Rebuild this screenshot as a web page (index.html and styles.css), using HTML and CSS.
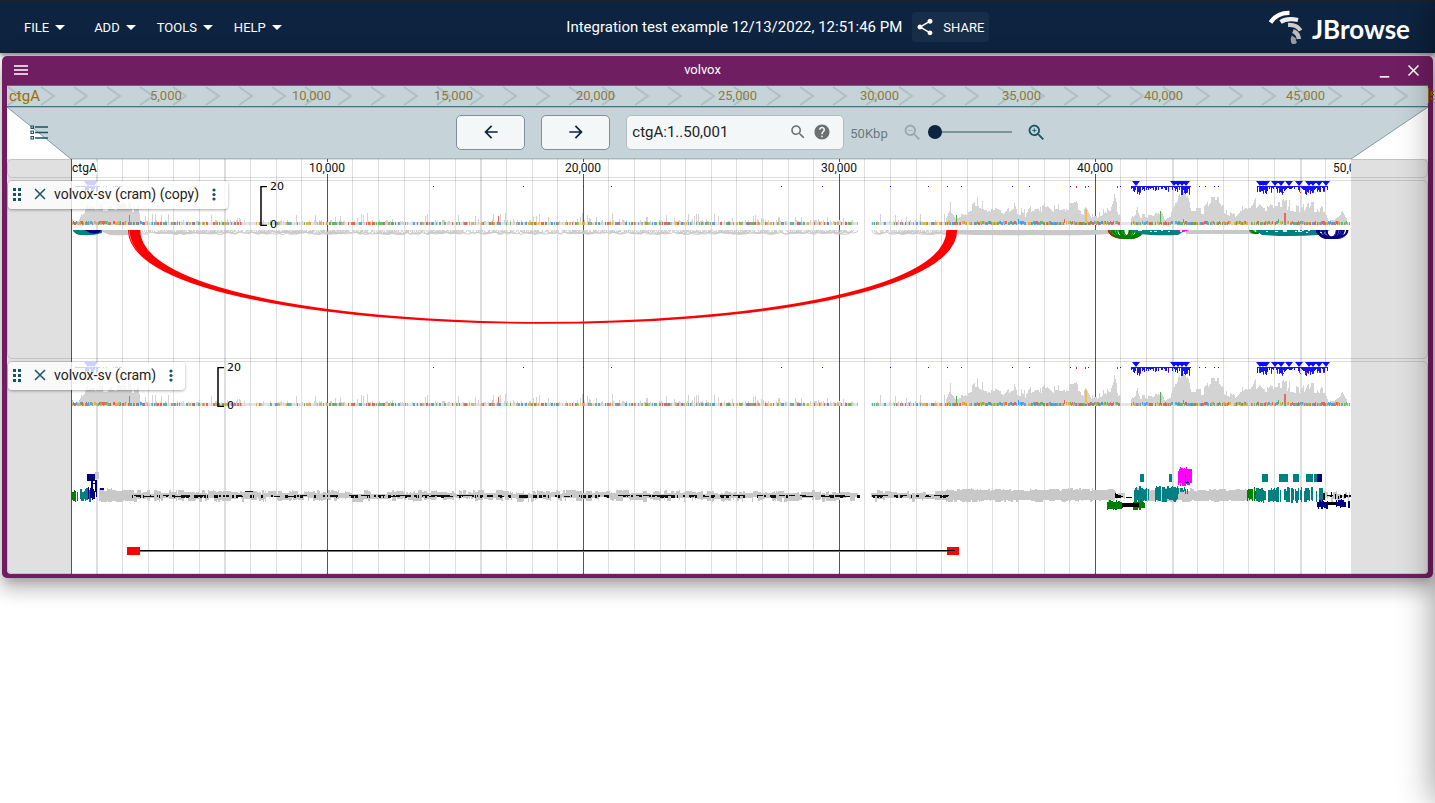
FILE: index.html
```html
<!DOCTYPE html>
<html lang="en">
<head>
<meta charset="utf-8">
<title>JBrowse</title>
<link rel="stylesheet" href="styles.css">
</head>
<body>
<header class="appbar">
  <nav class="menus">
    <button class="menu">FILE<svg class="caret" viewBox="0 0 10 5"><path d="M0 0h10L5 5z"/></svg></button>
    <button class="menu">ADD<svg class="caret" viewBox="0 0 10 5"><path d="M0 0h10L5 5z"/></svg></button>
    <button class="menu">TOOLS<svg class="caret" viewBox="0 0 10 5"><path d="M0 0h10L5 5z"/></svg></button>
    <button class="menu">HELP<svg class="caret" viewBox="0 0 10 5"><path d="M0 0h10L5 5z"/></svg></button>
  </nav>
  <div class="session">
    <span class="session-name">Integration test example 12/13/2022, 12:51:46 PM</span>
    <button class="share"><svg class="icon20" viewBox="0 0 24 24"><path d="M18 16.08c-.76 0-1.44.3-1.96.77L8.91 12.7c.05-.23.09-.46.09-.7s-.04-.47-.09-.7l7.05-4.11c.54.5 1.25.81 2.04.81 1.66 0 3-1.34 3-3s-1.34-3-3-3-3 1.34-3 3c0 .24.04.47.09.7L8.04 9.81C7.5 9.31 6.79 9 6 9c-1.66 0-3 1.34-3 3s1.34 3 3 3c.79 0 1.5-.31 2.04-.81l7.12 4.16c-.05.21-.08.43-.08.65 0 1.61 1.31 2.92 2.92 2.92s2.92-1.31 2.92-2.92-1.31-2.92-2.92-2.92z"/></svg>SHARE</button>
  </div>
  <div class="logo">
    <svg class="logo-mark" viewBox="0 0 36 34" fill="none">
      <path d="M2.500 12.500Q9 2.500 21.500 2.800" stroke="#fff" stroke-width="4.200"/>
      <path d="M12.500 12Q19 7.500 30 10" stroke="#eee" stroke-width="4.200"/>
      <path d="M20 15Q29 14.500 32.500 20.500" stroke="#ccc" stroke-width="4.200"/>
      <path d="M25 21Q30 23 31 29" stroke="#bbb" stroke-width="4.500"/>
      <path d="M26 27Q24 30 27 34" stroke="#999" stroke-width="5"/>
    </svg>
    <span class="logo-text">JBrowse</span>
  </div>
</header>

<main class="window">
  <div class="titlebar">
    <button class="tb-btn" aria-label="View menu"><svg class="burger" viewBox="0 0 14 11"><path d="M0 1h14M0 5h14M0 9h14"/></svg></button>
    <h1 class="view-name">volvox</h1>
    <div class="tb-right">
      <button class="tb-btn" aria-label="Minimize"><svg class="icon20" viewBox="0 0 24 24"><path d="M6 19h12v2H6z"/></svg></button>
      <button class="tb-btn" aria-label="Close"><svg class="icon20" viewBox="0 0 24 24"><path d="M19 6.410 17.590 5 12 10.590 6.410 5 5 6.410 10.590 12 5 17.590 6.410 19 12 13.410 17.590 19 19 17.590 13.410 12z"/></svg></button>
    </div>
  </div>

  <div class="overview">
    <svg class="chevrons" aria-hidden="true"><defs><pattern id="chev" width="33" height="20" patternUnits="userSpaceOnUse"><path d="M1 1 14 10 1 19" fill="none" stroke="#b0bec3" stroke-width="2"/></pattern></defs><rect width="100%" height="100%" fill="url(#chev)"/></svg>
    <span class="ref-name">ctgA</span>
    <span></span><span>5,000</span><span>10,000</span><span>15,000</span><span>20,000</span><span>25,000</span><span>30,000</span><span>35,000</span><span>40,000</span><span>45,000</span><span class="last-tick">50,000</span>
  </div>

  <div class="nav">
    <svg class="funnel" viewBox="0 0 1421 52" preserveAspectRatio="none"><path d="M0 0H1421L1344 52H64z"/></svg>
    <button class="selector" aria-label="Open track selector"><svg viewBox="0 0 18 15"><path d="M5 2h13M5 7.500h13M5 13h13" stroke-width="1.400"/><path d="M1 1h2.500v2.500H1zM1 6h2.500v2.500H1zM1 11.500h2.500V14H1z" stroke-width="1.100"/></svg></button>
    <div class="controls">
      <button class="pan" aria-label="Pan left"><svg class="icon20" viewBox="0 0 24 24"><path d="M20 11H7.830l5.590-5.590L12 4l-8 8 8 8 1.410-1.410L7.830 13H20v-2z"/></svg></button>
      <button class="pan" aria-label="Pan right"><svg class="icon20" viewBox="0 0 24 24"><path d="m12 4-1.410 1.410L16.170 11H4v2h12.170l-5.580 5.590L12 20l8-8z"/></svg></button>
      <div class="search">
        <input type="text" value="ctgA:1..50,001" aria-label="Location">
        <svg class="icon18" viewBox="0 0 24 24"><path d="M15.500 14h-.79l-.28-.27C15.410 12.590 16 11.110 16 9.500 16 5.910 13.090 3 9.500 3S3 5.910 3 9.500 5.910 16 9.500 16c1.610 0 3.090-.59 4.230-1.570l.27.28v.79l5 4.990L20.490 19l-4.990-5zm-6 0C7.010 14 5 11.990 5 9.500S7.010 5 9.500 5 14 7.010 14 9.500 11.990 14 9.500 14z"/></svg>
        <button class="help" aria-label="Help"><svg class="icon18" viewBox="0 0 24 24"><path d="M12 2C6.480 2 2 6.480 2 12s4.480 10 10 10 10-4.480 10-10S17.520 2 12 2zm1 17h-2v-2h2v2zm2.070-7.750-.9.920C13.450 12.900 13 13.500 13 15h-2v-.5c0-1.100.45-2.100 1.170-2.830l1.240-1.260c.37-.36.590-.86.590-1.410 0-1.100-.9-2-2-2s-2 .9-2 2H8c0-2.210 1.790-4 4-4s4 1.790 4 4c0 .88-.36 1.680-.93 2.250z"/></svg></button>
      </div>
      <span class="bp">50Kbp</span>
      <button class="zoom off" aria-label="Zoom out" disabled><svg viewBox="0 0 24 24"><path d="M15.500 14h-.79l-.28-.27C15.410 12.590 16 11.110 16 9.500 16 5.910 13.090 3 9.500 3S3 5.910 3 9.500 5.910 16 9.500 16c1.610 0 3.090-.59 4.230-1.570l.27.28v.79l5 4.990L20.490 19l-4.990-5zm-6 0C7.010 14 5 11.990 5 9.500S7.010 5 9.500 5 14 7.010 14 9.500 11.990 14 9.500 14zM7 9h5v1H7z"/></svg></button>
      <input class="slider" type="range" min="0" max="100" value="0" aria-label="Zoom level">
      <button class="zoom" aria-label="Zoom in"><svg viewBox="0 0 24 24"><path d="M15.500 14h-.79l-.28-.27C15.410 12.590 16 11.110 16 9.500 16 5.910 13.090 3 9.500 3S3 5.910 3 9.500 5.910 16 9.500 16c1.610 0 3.090-.59 4.230-1.570l.27.28v.79l5 4.990L20.490 19l-4.990-5zm-6 0C7.010 14 5 11.990 5 9.500S7.010 5 9.500 5 14 7.010 14 9.500 11.990 14 9.500 14zM12 10h-2v2H9v-2H7V9h2V7h1v2h2v1z"/></svg></button>
    </div>
  </div>

  <div class="tracks">
    <svg class="gridlines" id="grid" viewBox="71 0 1280 100" preserveAspectRatio="none" aria-hidden="true"></svg>
    <div class="ruler">
      <div class="ticks"><span class="first">ctgA</span><span class="tick">10,000</span><span class="tick">20,000</span><span class="tick">30,000</span><span class="tick">40,000</span><span class="tick">50,000</span></div>
    </div>
    <section class="track">
      <svg class="plot" id="arcs" viewBox="71 181 1280 177" preserveAspectRatio="none"></svg>
      <div class="label">
        <svg class="drag" viewBox="0 0 8 13"><path d="M0 0h3v3H0zM5 0h3v3H5zM0 5h3v3H0zM5 5h3v3H5zM0 10h3v3H0zM5 10h3v3H5z"/></svg>
        <button aria-label="Close track"><svg class="cross" viewBox="0 0 12 12"><path d="M1 1 11 11M11 1 1 11"/></svg></button>
        <span class="label-text">volvox-sv (cram) (copy)</span>
        <button aria-label="Track menu"><svg class="dots" viewBox="0 0 4 13"><circle cx="2" cy="2" r="1.600"/><circle cx="2" cy="6.500" r="1.600"/><circle cx="2" cy="11" r="1.600"/></svg></button>
      </div>
      <div class="yscale wide"><svg viewBox="0 0 7 40"><path d="M7 .5H1V39.500H7"/></svg><span>20</span><span>0</span></div>
    </section>
    <section class="track">
      <svg class="plot tall" id="pileup" viewBox="71 362 1280 211" preserveAspectRatio="none"></svg>
      <div class="label">
        <svg class="drag" viewBox="0 0 8 13"><path d="M0 0h3v3H0zM5 0h3v3H5zM0 5h3v3H0zM5 5h3v3H5zM0 10h3v3H0zM5 10h3v3H5z"/></svg>
        <button aria-label="Close track"><svg class="cross" viewBox="0 0 12 12"><path d="M1 1 11 11M11 1 1 11"/></svg></button>
        <span class="label-text">volvox-sv (cram)</span>
        <button aria-label="Track menu"><svg class="dots" viewBox="0 0 4 13"><circle cx="2" cy="2" r="1.600"/><circle cx="2" cy="6.500" r="1.600"/><circle cx="2" cy="11" r="1.600"/></svg></button>
      </div>
      <div class="yscale"><svg viewBox="0 0 7 40"><path d="M7 .5H1V39.500H7"/></svg><span>20</span><span>0</span></div>
    </section>
  </div>
</main>
<aside class="drawer-edge" aria-hidden="true"><div class="drawer"></div></aside>
<script src="tracks.js"></script>
</body>
</html>
```

FILE: styles.css
```css
* { box-sizing: border-box; }
html, body { height: 100%; }
body {
  margin: 0;
  position: relative;
  overflow: hidden;
  background: #fff;
  color: #222;
  font-family: Roboto, "Liberation Sans", sans-serif;
  font-size: 14px;
}
svg { display: block; flex: none; }
button {
  border: 0;
  padding: 0;
  background: none;
  color: inherit;
  font: inherit;
  display: flex;
  align-items: center;
}
.icon20 { width: 20px; height: 20px; fill: currentColor; }
.icon18 { width: 18px; height: 18px; fill: currentColor; }

.appbar {
  height: 53px;
  border-top: 1px solid #222;
  background: #0d233f;
  color: #fff;
  display: flex;
  justify-content: space-between;
  align-items: center;
  box-shadow: 0 2px 4px rgba(0,0,0,.3), 0 4px 6px rgba(0,0,0,.2);
}
.menus { display: flex; padding-left: 24px; gap: 21px; }
.menu { font-size: 13px; gap: 6px; height: 32px; }
.menu:first-child { margin-right: 8px; }
.caret { width: 10px; height: 5px; fill: #fff; }
.session { display: flex; align-items: center; gap: 10px; padding-left: 6px; }
.session-name { font-size: 15px; }
.share {
  height: 30px;
  padding: 0 5px 0 3px;
  gap: 8px;
  border-radius: 4px;
  background: #182d47;
  font-size: 13px;
}
.logo { display: flex; align-items: center; gap: 8px; padding-right: 25px; }
.logo-mark { width: 36px; height: 34px; }
.logo-text { font-family: Lato, sans-serif; font-weight: 700; font-size: 26px; line-height: 36px; padding-top: 4px; }

.window {
  margin: 3px 2px 0;
  padding: 0 5px 4px;
  border-radius: 5px;
  background: #701e62;
  box-shadow: 0 7px 8px -4px rgba(0,0,0,.2), 0 12px 17px 2px rgba(0,0,0,.14), 0 5px 22px 4px rgba(0,0,0,.12);
}
.titlebar {
  height: 29px;
  color: #fff;
  display: grid;
  grid-template-columns: 1fr auto 1fr;
  align-items: center;
}
.burger { width: 14px; height: 11px; stroke: #fff; stroke-width: 1.5; margin-left: 7px; }
.view-name { margin: 0; padding: 0 30px 2px 0; font-size: 13px; font-weight: 400; }
.tb-right { display: flex; justify-content: flex-end; gap: 10px; padding-right: 5px; }
.tb-right .icon20 { width: 19px; height: 19px; }

.overview {
  position: relative;
  height: 22px;
  padding: 0 0 1px 1px;
  display: grid;
  grid-template-columns: repeat(10, 1fr) 0;
  align-items: center;
  border: 1px solid #3f7880;
  border-width: 1px 0;
  background: #c6d4d9;
  color: #8b7a3c;
  font-size: 13px;
}
.overview > span { white-space: nowrap; }
.overview .ref-name { position: absolute; left: 2px; color: #a16b00; font-size: 15px; }
.overview .last-tick { width: 6px; overflow: hidden; border-left: 1px solid #a16b00; color: #a16b00; }
.chevrons { position: absolute; inset: 0; width: 100%; height: 100%; }
.overview > span:not(.ref-name) { position: relative; }

.nav {
  position: relative;
  height: 52px;
  padding-bottom: 2px;
  background: #fff;
  display: flex;
  align-items: center;
  color: #0d233f;
}
.funnel { position: absolute; inset: 0; width: 100%; height: 100%; }
.funnel path { fill: #c6d4d9; stroke: #7c9fa5; stroke-width: 1; }
.nav > button, .controls { position: relative; }
.selector { width: 64px; padding-left: 23px; }
.selector svg { width: 18px; height: 15px; stroke: #135560; fill: none; }
.controls { flex: 1; display: flex; align-items: center; justify-content: center; padding-left: 4px; }
.pan {
  width: 69px;
  height: 35px;
  margin-right: 16px;
  justify-content: center;
  border: 1px solid #7f8ea0;
  border-radius: 5px;
  background: #f3f7f8;
}
.search {
  width: 218px;
  height: 35px;
  padding: 0 12px 0 5px;
  display: flex;
  align-items: center;
  gap: 6px;
  border: 1px solid #b3bcc0;
  border-radius: 5px;
  background: #f3f7f8;
  color: #6c6f70;
}
.search input {
  flex: 1;
  min-width: 0;
  border: 0;
  padding: 0;
  background: none;
  color: #222;
  font: inherit;
  font-size: 15px;
}
.bp { margin: 2px 14px 0 6px; color: #6b787c; font-size: 13px; }
.zoom svg { width: 21px; height: 21px; fill: #135560; }
.zoom.off svg { fill: #9aa6aa; }
.slider { appearance: none; width: 84px; height: 16px; margin: 0 14px 0 5px; background: none; }
.slider::-webkit-slider-runnable-track { height: 2px; background: #7c93a1; }
.slider::-webkit-slider-thumb { appearance: none; width: 14px; height: 14px; margin-top: -6px; border-radius: 50%; background: #0d233f; }

.tracks {
  position: relative;
  display: grid;
  gap: 2px;
  overflow: hidden;
  border-radius: 0 0 4px 4px;
  background: linear-gradient(90deg, #e0e0e0 64px, #fff 64px calc(100% - 77px), #e0e0e0 calc(100% - 77px));
}
.gridlines { position: absolute; left: 64px; top: 0; width: calc(100% - 141px); height: 100%; }
.ruler, .track { position: relative; border: 1px solid rgba(0,0,0,.13); border-radius: 5px; }
.ruler { height: 19px; padding: 0 76px 0 63px; }
.ticks { position: relative; overflow: hidden; height: 17px; font-size: 12px; line-height: 12px; color: #111; }
.ticks span { background: #fff; position: absolute; top: 2px; }
.ticks .first { left: 1px; }
.tick { width: 40px; margin-left: -20px; text-align: center; }
.tick:nth-child(2) { left: 20%; }
.tick:nth-child(3) { left: 40%; }
.tick:nth-child(4) { left: 60%; }
.tick:nth-child(5) { left: 80%; }
.tick:nth-child(6) { left: 100%; }
.track { padding: 0 76px 0 63px; }
.plot { width: 100%; height: 177px; overflow: visible; }
.plot.tall { height: 211px; }

.label {
  position: absolute;
  left: 0;
  top: 0;
  height: 28px;
  padding: 0 12px 2px 5px;
  display: flex;
  align-items: center;
  border-radius: 4px;
  background: rgba(255,255,255,.8);
  box-shadow: 0 1px 3px rgba(0,0,0,.35);
  font-size: 14px;
}
.drag { width: 8px; height: 13px; fill: #135560; margin-right: 13px; }
.cross { width: 12px; height: 12px; stroke: #135560; stroke-width: 1.5; }
.label-text { margin: 0 13px 0 8px; }
.dots { width: 4px; height: 13px; fill: #135560; }
.yscale {
  position: absolute;
  left: 209px;
  top: 0;
  height: 49px;
  width: 40px;
  padding-left: 10px;
  display: flex;
  flex-direction: column;
  justify-content: space-between;
  color: #000;
  font: 11px/11px "DejaVu Sans", sans-serif;
}
.yscale.wide { left: 252px; }
.yscale svg { position: absolute; left: 0; top: 5px; width: 7px; height: 40px; fill: none; stroke: #000; stroke-width: 1.5; }

.drawer-edge { position: absolute; right: 0; top: 0; width: 60px; height: 100%; overflow: hidden; pointer-events: none; }
.drawer { margin-left: 60px; width: 60px; height: 100%; box-shadow: 0 0 36px rgba(0,0,0,.42); }
```

FILE: tracks.js
```js
let seed = 7;
const rnd = () => (seed = (seed * 16807) % 2147483647) / 2147483647;
const R = (x, y, w, h) => `M${x} ${y}h${w}v${h}h${-w}z`;
const P = (d, fill, extra = '') => `<path d="${d}" fill="${fill}" ${extra}/>`;
const S = (d, stroke, w = 1) => `<path d="${d}" fill="none" stroke="${stroke}" stroke-width="${w}"/>`;
const crisp = s => `<g shape-rendering="crispEdges">${s}</g>`;

// gridlines, one per kilobase
const wide = [1, 6, 16, 43, 48];
let minor = '', major = '';
for (let i = 1; i < 50; i++) {
  const x = Math.floor(71 + i * 25.6 + 0.2);
  if (i % 10) minor += R(x, 0, wide.includes(i) ? 2 : 1, 100);
  else major += R(x, 0, 1, 100);
}
document.getElementById('grid').innerHTML = crisp(P(minor, '#dedede') + P(major + R(71, 0, 1, 100), '#555'));

// read depth, as [x, height] knots
const depth = [[72,6],[78,4],[82,14],[90,23],[100,20],[110,22],[120,21],[128,24],[138,19],[140,5],
  [945,5],[948,16],[950,25],[955,12],[962,14],[970,20],[977,28],[984,22],[995,17],[1003,16],[1013,29],[1016,18],[1025,15],[1033,23],
  [1040,20],[1047,30],[1053,20],[1063,24],[1072,22],[1076,24],[1083,16],[1086,27],[1091,12],[1096,12],[1105,20],[1110,17],[1114,30],[1118,14],[1120,12],
  [1131,8],[1134,14],[1137,26],[1140,12],[1150,11],[1158,18],[1165,8],[1170,11],[1174,20],[1178,30],[1184,33],[1188,31],[1191,18],[1205,19],[1210,28],[1219,28],[1226,18],[1235,10],[1245,23],
  [1250,18],[1258,31],[1264,22],[1275,24],[1290,26],[1300,22],[1312,24],[1325,18],[1328,6],[1334,6],[1341,15],[1346,7],[1347,2],[1350,0]];
const low = x => (x > 140 && x < 858) || (x > 871 && x < 945);
const gap = x => (x >= 858 && x <= 871) || (x > 1120 && x < 1131);
const runs = [];
let jag = 1;
for (let x = 72; x < 1350; x++) {
  if (gap(x)) { runs.push(0); continue; }
  if (low(x)) {
    const r = rnd();
    runs.push(Math.round(r < 0.1 ? 4 + rnd() * 8 : r < 0.55 ? 2 + rnd() * 3 : 0));
    continue;
  }
  let k = 0;
  while (k < depth.length - 2 && depth[k + 1][0] < x) k++;
  const [a, ha] = depth[k], [b, hb] = depth[k + 1];
  const h = ha + (hb - ha) * Math.min(1, (x - a) / (b - a));
  if (rnd() < 0.5) jag = 0.55 + rnd() * 0.5;
  runs.push(Math.round(h * (x < 1190 && x > 1174 ? 0.85 + rnd() * 0.2 : jag)));
}
const hues = ['#e5473b', '#4caf50', '#3996e8', '#e9a820'];
const bases = ['', '', '', ''];
let grey = '';
runs.forEach((h, i) => {
  const x = 72 + i;
  if (gap(x)) return;
  if (h) grey += R(x, 44 - h, 1, h);
  const dense = !low(x);
  if (rnd() < (dense ? 0.8 : 0.42)) bases[Math.floor(rnd() * 4)] += R(x, dense && rnd() < 0.35 ? 40 : 41, rnd() < 0.4 ? 2 : 1, 3);
});
let blue = '', tip = '', tris = '';
const hist = (a, b, m) => {
  for (let x = a; x < b; x++) {
    const h = 1 + Math.round(rnd() * m);
    blue += R(x, 5, 1, rnd() < 0.3 ? 1 : h);
    if (h > 4 && rnd() < 0.35) tip += R(x, 5 + h, 1, 1);
  }
};
const ramp = c => hist(c - 5, c + 5, 8);
hist(1131, 1190, 4); hist(1257, 1328, 5); ramp(1136); ramp(1180); ramp(1186); ramp(1262); ramp(1281); ramp(1310);
[1136,1174,1178,1182,1186,1260,1263,1266,1275,1281,1289,1299,1309,1313,1319,1326].forEach(x => {
  tris += `M${x - 4} 0h8l-4 5z`;
});
for (let x = 75; x < 122; x++) if (x < 100 || rnd() < 0.4) blue += R(x, 5, 1, x > 84 && x < 98 ? 1 + Math.round(rnd() * 6) : 1);
[88, 91, 94].forEach(x => { tris += `M${x - 4} 0h8l-4 5z`; });
[433,523,583,611,781,822,890,928,947,961,1012,1029,1070,1076,1088,1120,1199,1205,1214,1218].forEach(x => { blue += R(x, 5, 1, 1); });
[1076,1085,1117].forEach(x => { tip += R(x, 5, 1, 2); });

const coverage = y => `<g transform="translate(0 ${y})">` + crisp(
  P(grey, '#d3d3d3') + P(R(72, 41, 786, 3) + R(871, 41, 478, 3), '#d3d3d3', 'opacity=".6"') + bases.map((d, i) => P(d, hues[i], 'opacity=".8"')).join('') +
  P(R(1085, 28, 2, 14), '#eebf4a') + P(R(956, 34, 1, 8) + R(1160, 30, 1, 12) + R(1278, 38, 1, 4), '#4caf50') +
  P(R(129, 34, 1, 8) + R(498, 35, 1, 7) + R(1284, 32, 2, 10) + R(1064, 38, 1, 4) + R(1183, 38, 1, 4), '#e5695f') + P(R(1018, 38, 1, 5), '#3996e8') +
  P(blue, '#1414f5') + P(tip, '#d0206a')) + P(tris, '#0a0aff') + '</g>';

// read-pair arcs
const arc = (a, b, h) => `M${a} 230C${a} ${230 + h} ${b} ${230 + h} ${b} 230`;
let out = coverage(181);
let scrib = '';
for (let x = 140; x < 945; x += 2) {
  if (gap(x) || gap(x + 10)) continue;
  const w = 4 + rnd() * 12;
  if (rnd() < 0.85) scrib += arc(x, x + w, 3 + rnd() * 3);
}
out += S(scrib, '#c8c8c8');
out += P('M98 230H140V234Q125 236 110 235zM945 230H1112V234Q1080 236 1030 235Q990 236 947 234zM1186 230H1252V234H1186z', '#c8c8c8');
let red = '';
for (let i = 0; i <= 12; i++) red += arc(130 + i * 0.8, 947 + i * 0.8, 123.5 + (i % 3) * 0.4);
out += S(red + arc(128.5, 947, 124), '#f00', 1.1);
const fan = (a, b, n, spread, h, c) => {
  let d = '';
  for (let i = 0; i < n; i++) { const o = rnd() * spread; d += arc(a + o, b - spread + rnd() * spread, h - rnd() * 2); }
  out += S(d, c);
};
fan(73, 90, 10, 6, 6, '#008000');
out += P('M73 230H102V233Q92 236 82 235Q76 235 73 231z', '#008080') + P('M85 230H101Q100 235 90 233z', '#000080');
fan(1107, 1142, 3, 4, 12, '#f00'); fan(1109, 1144, 30, 15, 11.5, '#008000');
out += P('M1131 230H1186L1178 235Q1155 236 1140 234z', '#008080') + P('M1177 230H1189L1184 232H1180z', '#f0f');
fan(1249, 1262, 8, 5, 5, '#008000');
out += P('M1255 230H1330L1318 235Q1290 237 1262 235z', '#008080');
fan(1316, 1348, 22, 12, 11.5, '#000080');
let gaps = '';
for (let i = 0; i < 26; i++) { const x = i < 10 ? 1135 + rnd() * 45 : 1265 + rnd() * 55; gaps += R(Math.round(x), 230 + Math.round(rnd() * 2), 2, 1); }
out += crisp(P(gaps, '#d7e6e6'));
document.getElementById('arcs').innerHTML = out;

// pileup of linked reads
let rg = '', rk = '';
let up = 1, down = 1;
for (let x = 99; x < 1350; x++) {
  if ((x > 857 && x < 871) || (x > 1124 && x < 1134) || (x > 1254 && x < 1322)) continue;
  const full = x < 132 || (x > 945 && x < 1115) || (x > 1131 && x < 1250);
  if (rnd() < 0.4) { up = rnd(); down = rnd(); }
  const t = full ? 5 + up * 3 : x > 1322 ? up * 5 : 2 + up * 4;
  const b = full ? 4 + down * 2 : 1 + down * 5;
  rg += R(x, Math.round(496 - t), 1, Math.round(t + b));
  if (!full && rnd() < 0.22) rk += R(x, 495, 1 + Math.round(rnd() * 2), 2 + Math.round(rnd()));
  if (!full && rnd() < 0.07) rk += R(x, 495 + Math.round(rnd()), 6, 1);
}
rk += R(245, 491, 8, 1);
const noise = (a, b, y0, y1, p) => {
  let d = '';
  for (let x = a; x < b; x++) if (rnd() < p) { const t = rnd() * 4; d += R(x, Math.round(y0 + t), rnd() < 0.4 ? 2 : 1, Math.round(y1 - y0 - t - rnd() * 3)); }
  return d;
};
let pile = P(rg, '#c8c8c8') + P(rk, '#111');
pile += P(R(1107, 502, 1, 8) + R(1112, 501, 1, 8) + R(1133, 506, 4, 4), '#f00');
pile += P(noise(71, 78, 490, 502, 0.95) + noise(1247, 1260, 487, 501, 0.6) + noise(1108, 1122, 499, 510, 1) + R(1108, 502, 14, 7) + noise(1133, 1145, 499, 510, 0.9) + R(1136, 502, 8, 6), '#008000');
pile += P(R(1122, 503, 17, 4) + R(1326, 502, 18, 3) + R(1126, 497, 6, 1) + 'M1115 493l9 4-9 1z' + noise(1320, 1346, 492, 500, 0.25), '#000');
pile += P(noise(79, 90, 488, 502, 0.65) + noise(1132, 1178, 486, 502, 0.68) + noise(1176, 1191, 487, 494, 0.45) + noise(1256, 1326, 487, 503, 0.7), '#008080');
pile += P([[1140,4],[1169,3],[1262,6],[1279,9],[1293,6],[1306,7],[1314,4]].map(([x, w]) => R(x, 474, w, 8)).join(''), '#008080');
pile += P(R(87, 474, 8, 7) + R(91, 481, 2, 10) + R(95, 480, 2, 12) + R(91, 483, 5, 1) + R(1317, 474, 5, 8) + noise(86, 97, 487, 500, 0.8) + R(100, 488, 4, 2) + noise(1317, 1328, 499, 509, 1) + R(1317, 502, 10, 5) + noise(1336, 1345, 499, 509, 0.9) + R(1348, 501, 2, 7), '#000080');
pile += P(R(95, 472, 4, 7), '#c8c8c8');
pile += P(noise(1178, 1191, 467, 486, 1) + R(1179, 469, 11, 14), '#f0f') + P(R(1185, 475, 1, 8) + R(1186, 482, 3, 1), '#000080');
pile += P(R(127, 547, 13, 8) + R(947, 547, 12, 8), '#f00') + P(R(140, 550, 815, 1), '#000') + P(R(140, 551, 807, 1), '#777');
document.getElementById('pileup').innerHTML = coverage(362) + crisp(pile);
```
